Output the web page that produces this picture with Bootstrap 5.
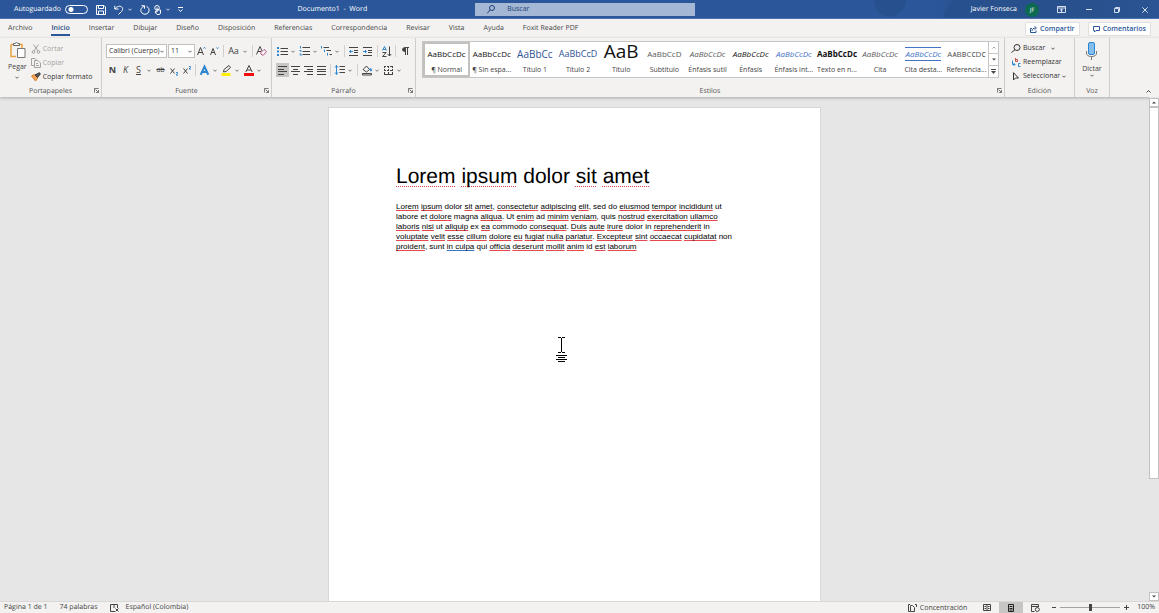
<!DOCTYPE html>
<html lang="es">
<head>
<meta charset="utf-8">
<meta name="viewport" content="width=device-width, initial-scale=1">
<title>Documento1 - Word</title>
<link rel="stylesheet" href="https://cdn.jsdelivr.net/npm/bootstrap@5.3.0/dist/css/bootstrap.min.css">
<style>
  :root { --blue: #2b579a; --chrome: #f3f2f1; --ink: #444; --acc: #2e86d1; }
  body { font-family: "Open Sans", "Noto Sans", sans-serif; font-size: 7px; line-height: 10px; color: var(--ink); background: #e6e6e6; text-rendering: geometricPrecision; }
  svg { display: block; flex: none; fill: none; stroke: currentColor; stroke-width: 1; overflow: visible; }
  button { padding: 0; border: 0; background: transparent; color: inherit; line-height: inherit; display: flex; align-items: center; justify-content: center; white-space: nowrap; }
  a { color: inherit; text-decoration: none; }

  .titlebar { height: 19px; background: var(--blue); color: #fff; border-bottom: 1px solid #4a72b0; }
  .zone-left { width: 41%; padding: 1px 0 0 14px; }
  .zone-search { width: 19%; height: 13px; background: #a4b8d6; color: #1d3f77; padding-left: 12px; }
  .zone-search input { font-size: 7px; line-height: 10px; background: transparent; border: 0; padding: 0; color: #1d3f77; outline: 0; }
  .zone-search input::placeholder { color: #1d3f77; opacity: 1; }
  .zone-right { padding-top: 1px; background: radial-gradient(circle at 42% 0, #27508f 0 16px, transparent 17px), radial-gradient(circle at 58% 100%, #27508f 0 20px, transparent 21px), linear-gradient(90deg, transparent 50%, #28508c 62%, #28508c 80%, #2b5494); }
  .doc-title { margin-right: 108px; }
  .autosave { appearance: none; width: 23px; height: 9px; margin: 0; border: 1px solid #fff; border-radius: 5px; background: radial-gradient(circle at 5px 50%, #fff 0 2px, transparent 3px); }
  .avatar { width: 14px; height: 14px; background: #0b6a4f; font-size: 6px; }
  .win { width: 28px; color: #d5dfee; }

  .tabs { height: 19px; background: var(--chrome); padding: 1px 0 0 8px; gap: 19px; }
  .tabs .on { font-weight: 600; color: #23477f; box-shadow: 0 2px 0 var(--blue); }
  .pill { height: 14px; padding: 0 4px; gap: 3px; background: #fff; border: 1px solid #e1dfdd; border-radius: 1px; color: #2b579a; font-size: 7px; font-weight: 600; }

  .ribbon { background: var(--chrome); height: 59px; box-shadow: 0 1px 3px #aaa; position: relative; }
  .grp { border-right: 1px solid #cfcdcb; display: flex; flex-direction: column; }
  .grp-body { height: 46px; }
  .grp-foot { display: grid; grid-template-columns: 1fr auto 1fr; height: 13px; align-items: center; padding: 0 2px; color: #555; }
  .grp-foot span { padding-top: 3px; }
  .grp-foot button { justify-self: end; }
  .g-clip { width: 102px; } .g-font { width: 170px; } .g-para { width: 144px; } .g-edit { width: 70px; } .g-voz { width: 35px; } .g-end { width: 49px; }
  .rows { display: flex; flex-direction: column; gap: 5px; padding: 6px 0 0 4px; }
  .tool-row { display: flex; align-items: center; height: 14px; }
  .ib { width: 13px; height: 14px; }
  .ib.wide { width: 15px; }
  .cv { width: 7px; height: 14px; margin-right: 2px; color: #555; }
  .vs { width: 1px; height: 12px; background: #d2d0ce; margin: 0 2px; }
  .sel { background: #c8c6c4; }
  .off { color: #a5a3a1; }
  .glyph { font-size: 9px; }
  .pick { display: flex; align-items: center; height: 14px; background: #fff; border: 1px solid #c3c1bf; position: relative; padding-left: 2px; }
  .pick select { appearance: none; border: 0; padding: 0; width: 100%; background: transparent; color: #333; font-size: 7px; line-height: 10px; }
  .pick svg { position: absolute; right: 2px; top: 5px; pointer-events: none; }
  .p-name { width: 61px; } .p-size { width: 27px; margin-left: 1px; }

  .gallery { margin: 3px 5px 0 6px; height: 37px; background: #fff; border: 1px solid #c8c6c4; display: flex; }
  .sty { flex: 1 1 0; min-width: 0; flex-direction: column; justify-content: flex-start; }
  .sty b { font-weight: 400; font-size: 8px; height: 23px; line-height: 24px; display: block; color: #111; }
  .sty span { line-height: 10px; }
  .sty.cur { border: 2px solid #c3c1bf; }
  .sty.cur b { height: 21px; line-height: 20px; }
  .sty b.t1 { font-size: 10px; color: #2f5496; } .sty b.t2 { font-size: 9px; color: #2f5496; } .sty b.tt { font-size: 19px; line-height: 18px; }
  .sty b.gr { color: #5a5a5a; } .sty b.bl { color: #4472c4; }
  .sty b.boxed { height: 14px; line-height: 12px; margin: 5px 0 4px; border: solid #4472c4; border-width: 1px 0; }
  .scrollers { width: 10px; border-left: 1px solid #c8c6c4; }
  .scrollers button { flex: 1; }
  .scrollers button + button { border-top: 1px solid #c8c6c4; }
  .cmd { height: 14px; gap: 2px; color: #333; }
  .cmd.off { color: #a5a3a1; }
  .cmds { padding: 3px 0 0 6px; }

  .work { position: relative; }
  .sheet { width: 493px; background: #fff; padding: 57px 67px 0; margin-top: 10px; border: solid #d8d8d8; border-width: 1px 1px 0; color: #000; font-family: "Liberation Sans", Arial, sans-serif; }
  .sheet h1 { font-size: 21px; line-height: 24px; margin: 0 0 13px; font-weight: 400; white-space: nowrap; }
  .sheet p { font-size: 8px; line-height: 10px; margin: 0; white-space: nowrap; text-rendering: optimizeSpeed; }
  .sheet u { text-decoration: underline solid #e5484d 1px; text-decoration-skip-ink: none; text-underline-offset: 1px; }
  .sheet h1 u { text-decoration-style: dotted; text-underline-offset: 3px; }
  .sheet u.gram { text-decoration-color: #3a76c4; }
  .caret { position: absolute; left: 556px; top: 240px; color: #000; }
  .vbar { width: 10px; background: #e6e6e6; padding-top: 1px; }
  .vbar button { height: 9px; background: #fff; border: 1px solid #c3c1bf; }
  .vbar .thumb { height: 74%; background: #fff; border: 1px solid #c3c1bf; }

  .status { height: 12px; background: var(--chrome); border-top: 1px solid #dad8d6; padding: 0 4px; }
  .zoom { appearance: none; width: 60px; height: 9px; background: linear-gradient(#a5a3a1, #a5a3a1) center / 100% 1px no-repeat; }
  .zoom::-webkit-slider-thumb { appearance: none; width: 3px; height: 7px; background: #444; }
</style>
</head>
<body class="vh-100 d-flex flex-column overflow-hidden">

<svg width="0" height="0" class="position-absolute" aria-hidden="true">
  <symbol id="chev" viewBox="0 0 5 3"><path d="M.5 .5 2.500 2.500 4.500 .5"/></symbol>
  <symbol id="launch" viewBox="0 0 6 6"><path d="M.5 5.500V.5H5.500M2 2 5 5M5.500 2.500V5.500H2.500"/></symbol>
</svg>

<header class="titlebar d-flex align-items-center flex-shrink-0">
  <div class="zone-left d-flex align-items-center">
    <label for="auto">Autoguardado</label>
    <input id="auto" type="checkbox" class="autosave ms-1" role="switch">
    <button class="ms-2" aria-label="Guardar"><svg width="10" height="10"><path d="M.5 .5H8L9.500 2V9.500H.5ZM2.500 .5V3.500H7.500V.5M2.500 9.500V6H7.500V9.500"/></svg></button>
    <button class="ms-2" aria-label="Deshacer"><svg width="10" height="10"><path d="M.8 .8V4H4.500M1 4C3 1 6 .7 7.500 1.800 9.500 3.500 8.500 5.500 7.500 6.500L4.500 9.500"/></svg></button>
    <button class="ms-1" aria-label="Opciones de deshacer"><svg width="4" height="3"><use href="#chev"/></svg></button>
    <button class="ms-1" aria-label="Rehacer"><svg class="ms-1" width="10" height="10"><path d="M1.500 .7H4.500V3.700M4.300 1.200C1 2.500 .2 5 1.200 7 3 10 7 10 8.700 7 9.800 4.500 8.500 2.300 6.500 1.300"/></svg></button>
    <button class="ms-1" aria-label="Modo táctil"><svg width="8" height="10"><circle cx="3" cy="2.800" r="2.300"/><path d="M3 2.500V7L1 6.200M3 5H6.500V8L5.500 9.500H3L1 7"/></svg></button>
    <button class="ms-1" aria-label="Opciones de modo"><svg width="4" height="3"><use href="#chev"/></svg></button>
    <button class="ms-2" aria-label="Personalizar"><svg width="5" height="5"><path d="M0 .5H5M.5 2.500 2.500 4.500 4.500 2.500"/></svg></button>
    <span class="doc-title ms-auto text-nowrap">Documento1&nbsp; - &nbsp;Word</span>
  </div>
  <div class="zone-search d-flex align-items-center">
    <svg width="8" height="9"><circle cx="5" cy="3" r="2.500"/><path d="M3.200 4.800 .3 8.300"/></svg>
    <input class="flex-fill ms-2 ps-1" type="text" placeholder="Buscar" aria-label="Buscar">
  </div>
  <div class="zone-right d-flex align-items-center justify-content-end flex-fill h-100">
    <span class="me-2">Javier Fonseca</span>
    <span class="avatar rounded-circle d-flex align-items-center justify-content-center me-2">JF</span>
    <button class="win" aria-label="Opciones de la cinta"><svg width="9" height="7"><path d="M.5 .5H8.500V6.500H.5ZM.5 2H8.500M4.500 6V3M3 4.300 4.500 3 6 4.300"/></svg></button>
    <button class="win" aria-label="Minimizar"><svg width="6" height="1"><path d="M0 .5H6"/></svg></button>
    <button class="win" aria-label="Restaurar"><svg width="6" height="6"><path d="M.5 1.500H4.500V5.500H.5ZM1.500 1.500V.5H5.500V4.500H4.500"/></svg></button>
    <button class="win" aria-label="Cerrar"><svg width="6" height="6"><path d="M.3 .3 5.700 5.700M5.700 .3 .3 5.700"/></svg></button>
  </div>
</header>

<nav class="tabs d-flex align-items-center flex-shrink-0 pe-2">
  <a href="#">Archivo</a><a href="#" class="on">Inicio</a><a href="#">Insertar</a><a href="#">Dibujar</a><a href="#">Diseño</a><a href="#">Disposición</a><a href="#">Referencias</a><a href="#">Correspondencia</a><a href="#">Revisar</a><a href="#">Vista</a><a href="#">Ayuda</a><a href="#">Foxit Reader PDF</a>
  <div class="d-flex gap-2 ms-auto">
    <button class="pill"><svg width="7" height="7"><path d="M2 2.500H.5V6.500H6V4.500M2 5C2 3 3.500 2 5.500 2M4.500 .3 6.500 2 4.500 3.700"/></svg>Compartir</button>
    <button class="pill"><svg width="7" height="7"><path d="M.5 .5H6.500V4.500H3L1.500 6V4.500H.5Z"/></svg>Comentarios</button>
  </div>
</nav>

<section class="ribbon d-flex flex-shrink-0" aria-label="Cinta de opciones">
  <div class="grp g-clip">
    <div class="grp-body d-flex pt-1">
      <button class="flex-column justify-content-start ms-2 me-1"><svg width="17" height="16"><path d="M2 2.500H13V6M7 14.500H2V2.500" stroke="#e8a33d" stroke-width="1.500"/><path d="M4.500 3.500V1.500H6Q7.500 -.5 9 1.500H10.500V3.500Z" fill="#fff" stroke="#666"/><path d="M8.500 6.500H16V15.500H8.500Z" fill="#fff" stroke="#777"/></svg><span class="mt-1">Pegar</span><svg class="mt-1" width="4" height="3"><use href="#chev"/></svg></button>
      <div>
        <button class="cmd off"><svg width="10" height="10"><path d="M2.500 .5 7 7M7.500 .5 3 7"/><circle cx="2.500" cy="8" r="1.300"/><circle cx="7.500" cy="8" r="1.300"/></svg>Cortar</button>
        <button class="cmd off"><svg width="10" height="10"><path d="M3 7.500H.5V.5H4L5.500 2M3.500 2.500H7L9.500 5V9.500H3.500ZM5 5.500H7M5 7.500H8"/></svg>Copiar</button>
        <button class="cmd"><svg width="10" height="10"><path d="M.5 4 4.500 9 7 5.500 3.500 2.500Z" fill="#f2a654" stroke="#dc8025"/><path d="M4 3 8.500 .7 9.300 2 6.500 5.500Z" fill="#555"/></svg>Copiar formato</button>
      </div>
    </div>
    <div class="grp-foot"><i></i><span>Portapapeles</span><button aria-label="Más opciones de portapapeles"><svg width="5" height="5"><use href="#launch"/></svg></button></div>
  </div>

  <div class="grp g-font">
    <div class="grp-body rows">
      <div class="tool-row">
        <div class="pick p-name"><select aria-label="Fuente"><option>Calibri (Cuerpo)</option></select><svg width="4" height="3"><use href="#chev"/></svg></div>
        <div class="pick p-size"><select aria-label="Tamaño"><option>11</option></select><svg width="4" height="3"><use href="#chev"/></svg></div>
        <button class="ib" aria-label="Aumentar fuente"><svg width="9" height="8"><path d="M.5 8 3.500 .5 6.500 8M1.500 5.500H5.500"/><path d="M6.500 1.500 7.500 .3 8.500 1.500" stroke="#2e86d1"/></svg></button>
        <button class="ib" aria-label="Disminuir fuente"><svg width="9" height="8"><path d="M.5 8 3 1.500 5.500 8M1.500 5.500H4.500"/><path d="M6.500 .5 7.500 1.700 8.500 .5" stroke="#2e86d1"/></svg></button>
        <span class="vs"></span>
        <button class="ib wide glyph">Aa</button><button class="cv" aria-label="Mayúsculas"><svg width="4" height="3"><use href="#chev"/></svg></button>
        <span class="vs"></span>
        <button class="ib" aria-label="Borrar formato"><svg width="11" height="10"><path d="M.5 8.500 4 .5 6 5M1.800 5.500H5"/><path d="M4.500 7 8 3.500 10.500 5.500 7.500 9H6Z" fill="#fff" stroke="#b8507c"/></svg></button>
      </div>
      <div class="tool-row">
        <button class="ib fw-bold glyph">N</button><button class="ib fst-italic glyph">K</button><button class="ib text-decoration-underline glyph">S</button><button class="cv" aria-label="Tipos de subrayado"><svg width="4" height="3"><use href="#chev"/></svg></button>
        <button class="ib text-decoration-line-through">ab</button>
        <button class="ib" aria-label="Subíndice"><svg width="8" height="9"><path d="M.5 2.500 4.500 7.500M4.500 2.500 .5 7.500"/><path d="M6 6.500H7.500V7.500L6 9H8" stroke="#2e86d1"/></svg></button>
        <button class="ib" aria-label="Superíndice"><svg width="8" height="9"><path d="M.5 2.500 4.500 7.500M4.500 2.500 .5 7.500"/><path d="M6 .5H7.500V1.500L6 3H8" stroke="#2e86d1"/></svg></button>
        <span class="vs"></span>
        <button class="ib" aria-label="Efectos de texto"><svg width="9" height="9"><path d="M.7 8.700 4.500 .7 8.300 8.700M2.500 6H6.500" stroke="#2e86d1" stroke-width="2"/></svg></button><button class="cv" aria-label="Más efectos"><svg width="4" height="3"><use href="#chev"/></svg></button>
        <button class="ib" aria-label="Resaltado"><svg width="11" height="11"><path d="M3 4.500 8 .5 9.500 2.500 5 6.500 2.500 7Z"/><path d="M.5 9.500H9.500" stroke="#ffee00" stroke-width="3"/></svg></button><button class="cv" aria-label="Colores de resaltado"><svg width="4" height="3"><use href="#chev"/></svg></button>
        <button class="ib" aria-label="Color de fuente"><svg width="10" height="11"><path d="M1.800 7 5 .5 8.200 7M3 5H7"/><path d="M0 9.500H10" stroke="#f01010" stroke-width="3"/></svg></button><button class="cv" aria-label="Más colores"><svg width="4" height="3"><use href="#chev"/></svg></button>
      </div>
    </div>
    <div class="grp-foot"><i></i><span>Fuente</span><button aria-label="Más opciones de fuente"><svg width="5" height="5"><use href="#launch"/></svg></button></div>
  </div>

  <div class="grp g-para">
    <div class="grp-body rows">
      <div class="tool-row">
        <button class="ib" aria-label="Viñetas"><svg width="11" height="9"><path d="M0 1H2M0 4.500H2M0 8H2" stroke="#2e86d1" stroke-width="2"/><path d="M3.500 1.500H11M3.500 4.500H11M3.500 7.500H11"/></svg></button><button class="cv" aria-label="Tipos de viñeta"><svg width="4" height="3"><use href="#chev"/></svg></button>
        <button class="ib" aria-label="Numeración"><svg width="11" height="10"><path d="M1.500 0V2.500M.5 4.500H2V6M.5 8H2V10" stroke="#2e86d1"/><path d="M3.500 1.500H11M3.500 5.500H11M3.500 8.500H11"/></svg></button><button class="cv" aria-label="Tipos de numeración"><svg width="4" height="3"><use href="#chev"/></svg></button>
        <button class="ib" aria-label="Lista multinivel"><svg width="11" height="10"><path d="M.5 0V2.500M3.500 3.500V6M6.500 7V9.500" stroke="#2e86d1"/><path d="M2.500 1.500H8M5.500 4.500H10M8.500 8.500H11"/></svg></button><button class="cv" aria-label="Tipos de lista"><svg width="4" height="3"><use href="#chev"/></svg></button>
        <span class="vs"></span>
        <button class="ib" aria-label="Disminuir sangría"><svg width="9" height="9"><path d="M0 .5H9M5 3.500H9M5 5.500H9M0 8.500H9"/><path d="M4 4.500H.5M2 3 .5 4.500 2 6" stroke="#2e86d1"/></svg></button>
        <button class="ib wide" aria-label="Aumentar sangría"><svg width="9" height="9"><path d="M0 .5H9M5 3.500H9M5 5.500H9M0 8.500H9"/><path d="M0 4.500H3.500M2 3 3.500 4.500 2 6" stroke="#2e86d1"/></svg></button>
        <span class="vs"></span>
        <button class="ib" aria-label="Ordenar"><svg width="10" height="11"><path d="M.5 4.500 2.500 .5 4.500 4.500M1.200 3.500H3.800" stroke="#2e86d1"/><path d="M.5 6.500H4.200L.5 10.500H4.500M7.500 .5V10M5.700 8 7.500 10 9.300 8"/></svg></button>
        <span class="vs"></span>
        <button class="ib wide" aria-label="Mostrar todo"><svg width="7" height="8"><path d="M3.500 8V.5H7M5.500 8V.5"/><path d="M3.500 .5V4.500Q.5 4.500 .5 2.500T3.500 .5Z" fill="#444"/></svg></button>
      </div>
      <div class="tool-row">
        <button class="ib sel" aria-label="Alinear a la izquierda"><svg width="9" height="9"><path d="M0 .5H9M0 3.500H6M0 5.500H9M0 8.500H6"/></svg></button>
        <button class="ib" aria-label="Centrar"><svg width="9" height="9"><path d="M0 .5H9M2 3.500H7M0 5.500H9M2 8.500H7"/></svg></button>
        <button class="ib" aria-label="Alinear a la derecha"><svg width="9" height="9"><path d="M0 .5H9M3 3.500H9M0 5.500H9M3 8.500H9"/></svg></button>
        <button class="ib" aria-label="Justificar"><svg width="9" height="9"><path d="M0 .5H9M0 3.500H9M0 5.500H9M0 8.500H9"/></svg></button>
        <span class="vs"></span>
        <button class="ib" aria-label="Interlineado"><svg width="10" height="10"><path d="M1.500 .5V9.500M0 2.500 1.500 .5 3 2.500M0 7.500 1.500 9.500 3 7.500" stroke="#2e86d1"/><path d="M4.500 1.500H10M4.500 4.500H10M4.500 7.500H10"/></svg></button><button class="cv" aria-label="Más interlineado"><svg width="4" height="3"><use href="#chev"/></svg></button>
        <span class="vs"></span>
        <button class="ib" aria-label="Sombreado"><svg width="10" height="10"><path d="M1 4.500 4.500 1 7.500 4.500 4.500 7Z"/><path d="M8 3.500 9.500 6" stroke="#2e86d1" stroke-width="2"/><path d="M.5 8.500H9.500V10H.5Z"/></svg></button><button class="cv" aria-label="Colores de sombreado"><svg width="4" height="3"><use href="#chev"/></svg></button>
        <button class="ib" aria-label="Bordes"><svg width="9" height="9"><path d="M.5 0V9M8.500 0V9M4.500 0V9M0 .5H9M0 4.500H9" stroke-dasharray="2 1"/><path d="M0 8.500H9"/></svg></button><button class="cv" aria-label="Más bordes"><svg width="4" height="3"><use href="#chev"/></svg></button>
      </div>
    </div>
    <div class="grp-foot"><i></i><span>Párrafo</span><button aria-label="Más opciones de párrafo"><svg width="5" height="5"><use href="#launch"/></svg></button></div>
  </div>

  <div class="grp flex-fill">
    <div class="grp-body">
      <div class="gallery">
        <button class="sty cur"><b>AaBbCcDc</b><span>¶ Normal</span></button>
        <button class="sty"><b>AaBbCcDc</b><span>¶ Sin espa...</span></button>
        <button class="sty"><b class="t1">AaBbCc</b><span>Título 1</span></button>
        <button class="sty"><b class="t2">AaBbCcD</b><span>Título 2</span></button>
        <button class="sty"><b class="tt">AaB</b><span>Título</span></button>
        <button class="sty"><b class="gr">AaBbCcD</b><span>Subtítulo</span></button>
        <button class="sty"><b class="gr fst-italic">AaBbCcDc</b><span>Énfasis sutil</span></button>
        <button class="sty"><b class="fst-italic">AaBbCcDc</b><span>Énfasis</span></button>
        <button class="sty"><b class="bl fst-italic">AaBbCcDc</b><span>Énfasis int...</span></button>
        <button class="sty"><b class="fw-bold">AaBbCcDc</b><span>Texto en n...</span></button>
        <button class="sty"><b class="gr fst-italic">AaBbCcDc</b><span>Cita</span></button>
        <button class="sty"><b class="bl boxed fst-italic">AaBbCcDc</b><span>Cita desta...</span></button>
        <button class="sty"><b class="gr">AᴀBʙCᴄDᴄ</b><span>Referencia...</span></button>
        <div class="scrollers d-flex flex-column">
          <button class="off" aria-label="Fila anterior"><svg width="4" height="3"><path d="M.5 2.500 2 1 3.500 2.500"/></svg></button>
          <button aria-label="Fila siguiente"><svg width="4" height="3"><path d="M0 .5H4L2 2.500Z" fill="#444" stroke="none"/></svg></button>
          <button aria-label="Más estilos"><svg width="5" height="5"><path d="M0 .5H5"/><path d="M0 2H5L2.500 5Z" fill="#444" stroke="none"/></svg></button>
        </div>
      </div>
    </div>
    <div class="grp-foot"><i></i><span>Estilos</span><button aria-label="Más opciones de estilos"><svg width="5" height="5"><use href="#launch"/></svg></button></div>
  </div>

  <div class="grp g-edit">
    <div class="grp-body cmds">
      <button class="cmd"><svg width="10" height="9"><circle cx="6" cy="3.500" r="3"/><path d="M4 5.700 .5 8.500"/></svg>Buscar<svg class="ms-1" width="4" height="3"><use href="#chev"/></svg></button>
      <button class="cmd"><svg width="10" height="9"><path d="M1.500 2.500V6.500H4M2.500 5 4 6.500 2.500 8M9.500 5.500H7.500V8.500H9.500" stroke="#2e86d1"/><path d="M4.500 0V3.500H6.500V1.500H4.500" stroke="#c0504d"/></svg>Reemplazar</button>
      <button class="cmd"><svg width="10" height="9"><path d="M2.500 .7V8L4.500 6H7.500Z"/></svg>Seleccionar<svg width="4" height="3"><use href="#chev"/></svg></button>
    </div>
    <div class="grp-foot"><i></i><span>Edición</span><i></i></div>
  </div>

  <div class="grp g-voz">
    <div class="grp-body pt-1 d-flex justify-content-center">
      <button class="flex-column justify-content-start"><svg width="13" height="18"><rect x="3.500" y=".5" width="6" height="12" rx="1.500" fill="#83beec" stroke="#2e86d1"/><path d="M1.500 9V11Q1.500 14.500 6.500 14.500T11.500 11V9M6.500 14.500V18" stroke="#777"/></svg><span class="mt-1">Dictar</span><svg width="4" height="3"><use href="#chev"/></svg></button>
    </div>
    <div class="grp-foot"><i></i><span>Voz</span><i></i></div>
  </div>
  <div class="g-end d-flex align-items-end justify-content-end pe-1 pb-1"><button class="me-1" aria-label="Contraer la cinta"><svg width="5" height="3"><path d="M.5 2.500 2.500 .5 4.500 2.500"/></svg></button></div>
</section>

<main class="work d-flex flex-fill overflow-hidden">
  <div class="flex-fill d-flex justify-content-center">
    <article class="sheet">
      <h1><u>Lorem</u> <u>ipsum</u> dolor <u>sit</u> <u>amet</u></h1>
      <p><u>Lorem</u> <u>ipsum</u> dolor <u>sit</u> <u>amet</u>, <u>consectetur</u> <u>adipiscing</u> <u>elit</u>, sed do <u>eiusmod</u> <u>tempor</u> <u>incididunt</u> ut<br>
      labore et <u>dolore</u> magna <u>aliqua</u>. Ut <u>enim</u> ad <u>minim</u> <u>veniam</u>, quis <u>nostrud</u> <u>exercitation</u> <u>ullamco</u><br>
      <u>laboris</u> <u>nisi</u> ut <u>aliquip</u> ex <u>ea</u> commodo <u>consequat</u>. <u>Duis</u> <u>aute</u> <u>irure</u> dolor in <u>reprehenderit</u> in<br>
      <u>voluptate</u> <u>velit</u> <u>esse</u> <u>cillum</u> <u>dolore</u> <u>eu</u> <u>fugiat</u> <u>nulla</u> <u>pariatur</u>. <u>Excepteur</u> <u>sint</u> <u>occaecat</u> <u>cupidatat</u> non<br>
      <u>proident</u>, sunt <u class="gram">in culpa</u> qui <u>officia</u> <u>deserunt</u> <u>mollit</u> <u>anim</u> id <u>est</u> <u>laborum</u></p>
    </article>
  </div>
  <div class="vbar d-flex flex-column">
    <button aria-label="Subir"><svg width="4" height="3"><path d="M0 2.500H4L2 .5Z" fill="#444" stroke="none"/></svg></button>
    <div class="thumb"></div>
    <button class="mt-auto" aria-label="Bajar"><svg width="4" height="3"><path d="M0 .5H4L2 2.500Z" fill="#444" stroke="none"/></svg></button>
  </div>
  <svg class="caret" width="11" height="26"><path d="M2 .5H5M6 .5H9M5.500 1V15M2 15.500H5M6 15.500H9M0 18.500H11M2 20.500H9M0 22.500H11M2 24.500H9"/></svg>
</main>

<footer class="status d-flex align-items-center flex-shrink-0">
  <span>Página 1 de 1</span>
  <span class="ms-2 ps-1">74 palabras</span>
  <svg class="ms-2 me-2 ps-1" width="12" height="8"><path d="M5 7.500H.5V.5H7.500V4M4 .5V4M5.500 4.500 8.500 7.500M8.500 4.500 5.500 7.500"/></svg>
  <span>Español (Colombia)</span>
  <div class="ms-auto d-flex align-items-center h-100">
    <button><svg width="8" height="8" class="me-1"><path d="M2 .5H.5V7.500H2M2.500 2.500V7.500H6.500V3.500L4.500 1.500H2.500ZM7 .5H8.500V3"/></svg>Concentración</button>
    <button class="ms-3" aria-label="Modo de lectura"><svg width="8" height="7"><path d="M.5 .5H7.500V6.500H.5ZM4 .5V7M1.500 2.500H3M1.500 4.500H3M5 2.500H6.500M5 4.500H6.500"/></svg></button>
    <button class="sel ms-2 px-2 h-100" aria-label="Diseño de impresión"><svg width="8" height="8"><path d="M1.500 .5H6.500V7.500H1.500ZM2.500 2.500H5.500M2.500 4.500H5.500M2.500 6H5.500" stroke="#222"/></svg></button>
    <button class="ms-2" aria-label="Diseño web"><svg width="9" height="8"><path d="M3.500 7.500H.5V.5H7.500V3M.5 2.500H7"/><circle cx="6.300" cy="5.500" r="2"/></svg></button>
    <button class="ms-2 me-1 ps-1" aria-label="Alejar"><svg width="4" height="1"><path d="M0 .5H4"/></svg></button>
    <input class="zoom" type="range" min="0" max="100" value="50" aria-label="Zoom">
    <button class="mx-1" aria-label="Acercar"><svg width="5" height="5"><path d="M0 2.500H5M2.500 0V5"/></svg></button>
    <span class="ms-1">100%</span>
  </div>
</footer>

<script src="https://cdn.jsdelivr.net/npm/bootstrap@5.3.0/dist/js/bootstrap.bundle.min.js"></script>
</body>
</html>
